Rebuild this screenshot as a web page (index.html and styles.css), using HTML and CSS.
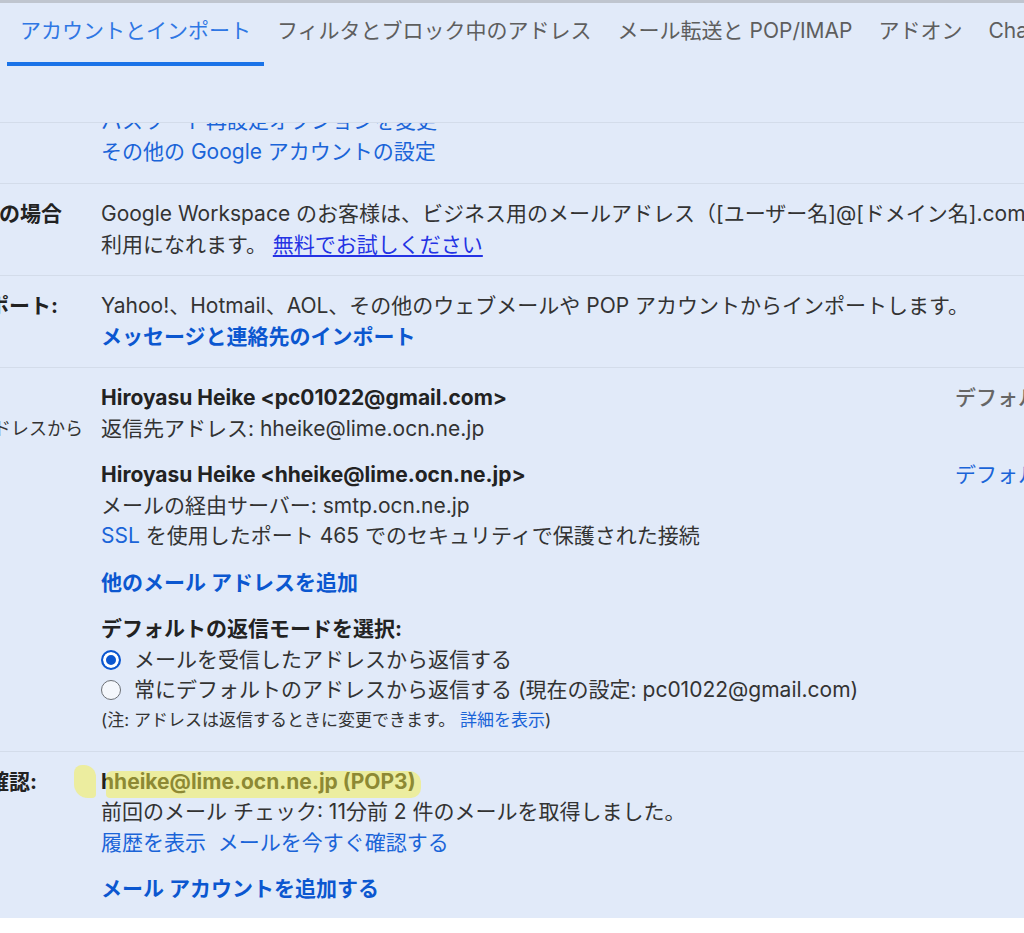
FILE: index.html
```html
<!DOCTYPE html>
<html lang="ja">

<head>
  <meta charset="utf-8">
  <link rel="stylesheet" href="styles.css">
</head>

<body>
  <div class="settings">
    <div class="tabs">
      <a class="tab active">アカウントとインポート</a>
      <a class="tab">フィルタとブロック中のアドレス</a>
      <a class="tab">メール転送と POP/IMAP</a>
      <a class="tab">アドオン</a>
      <a class="tab">Chat と Meet</a>
    </div>

    <div class="panel">
      <!-- account settings (scrolled under the tabs) -->
      <div class="row row-first">
        <div class="label"></div>
        <div class="content">
          <a class="link">パスワード再設定オプションを変更</a><br>
          <a class="link">その他の Google アカウントの設定</a>
        </div>
      </div>

      <div class="row">
        <div class="label"><span class="cut-workspace">ご利用の場合</span></div>
        <div class="content nowrap">
          Google Workspace のお客様は、ビジネス用のメールアドレス（[ユーザー名]@[ドメイン名].com）をご<br>
          利用になれます。 <a class="link-under">無料でお試しください</a>
        </div>
      </div>

      <div class="row">
        <div class="label"><span class="cut-import">インポート:</span></div>
        <div class="content nowrap">
          Yahoo!、Hotmail、AOL、その他のウェブメールや POP アカウントからインポートします。<br>
          <a class="link strong">メッセージと連絡先のインポート</a>
        </div>
      </div>

      <div class="row row-sendas">
        <div class="label">
          <span>&nbsp;</span>
          <span class="cut-sendas light">アドレスから</span>
        </div>
        <div class="content nowrap">
          <div class="addr">
            <div class="addr-info">
              <b>Hiroyasu Heike &lt;pc01022@gmail.com&gt;</b><br>
              返信先アドレス: hheike@lime.ocn.ne.jp
            </div>
            <div class="addr-action muted">デフォルト</div>
          </div>
          <div class="addr block">
            <div class="addr-info">
              <b>Hiroyasu Heike &lt;hheike@lime.ocn.ne.jp&gt;</b><br>
              メールの経由サーバー: smtp.ocn.ne.jp<br>
              <a class="link">SSL</a> を使用したポート 465 でのセキュリティで保護された接続
            </div>
            <div class="addr-action"><a class="link">デフォルトに設定</a></div>
          </div>
          <div class="block">
            <a class="link strong">他のメール アドレスを追加</a>
          </div>
          <div class="block">
            <b>デフォルトの返信モードを選択:</b>
            <label class="radio"><span class="dot on"></span>メールを受信したアドレスから返信する</label>
            <label class="radio"><span class="dot"></span>常にデフォルトのアドレスから返信する (現在の設定: pc01022@gmail.com)</label>
            <div class="note">(注: アドレスは返信するときに変更できます。 <a class="link">詳細を表示</a>)</div>
          </div>
        </div>
      </div>

      <div class="row row-last">
        <div class="label"><span class="cut-check">を確認:</span></div>
        <div class="content nowrap">
          <b class="marked">hheike@lime.ocn.ne.jp (POP3)</b><br>
          前回のメール チェック: 11分前 2 件のメールを取得しました。<br>
          <a class="link">履歴を表示</a>&nbsp; <a class="link">メールを今すぐ確認する</a>
          <div class="block">
            <a class="link strong">メール アカウントを追加する</a>
          </div>
        </div>
      </div>
    </div>
  </div>
</body>

</html>
```

FILE: styles.css
```css
* {
  box-sizing: border-box;
}

body {
  margin: 0;
  background: #fff;
  font: 21px/30.5px Inter, "Noto Sans CJK JP", sans-serif;
  color: #333;
  overflow: hidden;
}

a {
  cursor: pointer;
}

b {
  font-weight: bold;
  color: #222;
}
/* frame */

.settings {
  width: 1024px;
  overflow: hidden;
  background: #e1eaf9;
  border-top: 3px solid #bfc5cf;
}

.tabs {
  display: flex;
  height: 120px;
  padding-left: 7px;
  white-space: nowrap;
  border-bottom: 1px solid #d3dcea;
}

.tab {
  flex: none;
  padding: 13px 13px 13px;
  line-height: 30px;
  height: 63px;
  color: #5e5e5e;
  border-bottom: 4px solid transparent;
}

.tab.active {
  color: #2f77e4;
  border-bottom-color: #1a73e8;
}

.panel {
  overflow: hidden;
}
/* rows */

.row {
  display: flex;
  padding: 15px 0;
  border-bottom: 1px solid #d3dcea;
}

.row-first {
  margin-top: -17px;
  padding-top: 0;
  padding-bottom: 16px;
}

.row-sendas {
  padding-bottom: 16px;
}

.row-last {
  padding-bottom: 13px;
  border-bottom: 0;
}

.label {
  flex: none;
  width: 101px;
  overflow: hidden;
  white-space: nowrap;
  font-weight: bold;
  color: #222;
}

.label span {
  display: block;
}

.label .light {
  font-weight: normal;
  font-size: 18px;
  color: #333;
}

.cut-workspace {
  text-indent: -64px;
}

.cut-import {
  text-indent: -54px;
}

.cut-sendas {
  text-indent: -25px;
}

.cut-check {
  text-indent: -33px;
}

.content {
  flex: 1;
  min-width: 0;
}

.nowrap {
  white-space: nowrap;
}

.block {
  margin-top: 16px;
}
/* text */

.link {
  color: #1a64d8;
  text-decoration: none;
}

.link.strong {
  font-weight: bold;
  color: #0b57d0;
}

.link-under {
  color: #2433e4;
  text-decoration: underline;
  text-underline-offset: 3px;
}

.muted {
  color: #666;
  font-weight: 500;
}
/* send mail as */

.addr {
  display: flex;
}

.addr-info {
  flex: none;
  width: 854px;
}

.addr-action {
  flex: none;
}

.radio {
  display: flex;
  align-items: center;
}

.dot {
  flex: none;
  width: 20px;
  height: 20px;
  margin-right: 13px;
  border: 1.5px solid #6b6f75;
  border-radius: 50%;
  background: #f4f7fc;
}

.dot.on {
  border: 2px solid #0b57d0;
  background: #0b57d0;
  box-shadow: inset 0 0 0 3px #fff;
}

.note {
  font-size: 17px;
  line-height: 29px;
  color: #333;
}
/* highlighter */

.marked {
  position: relative;
}

.marked::before,
.marked::after {
  content: "";
  position: absolute;
  background: rgba(247, 240, 70, .5);
}

.marked::before {
  left: -27px;
  width: 22px;
  top: -4px;
  bottom: -4px;
  border-radius: 8px 12px 4px 14px;
}

.marked::after {
  left: 5px;
  right: -5px;
  top: 2px;
  bottom: -4px;
  border-radius: 6px 12px 10px 4px;
}
```
